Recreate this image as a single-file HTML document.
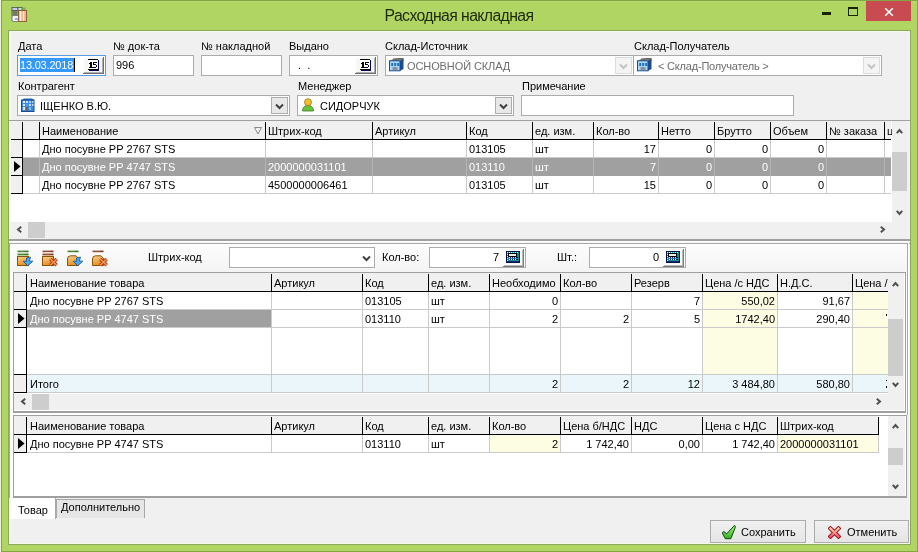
<!DOCTYPE html>
<html><head><meta charset="utf-8"><style>
html,body{margin:0;padding:0;width:918px;height:552px;overflow:hidden;background:#b1d563}
body>div{position:absolute}
.t{will-change:transform;font-family:"Liberation Sans",sans-serif;font-size:11px;line-height:13px;white-space:pre;color:#000}
</style></head><body>
<div style="left:0px;top:0px;width:918px;height:552px;background:#b1d563"></div>
<div style="left:0px;top:0px;width:1px;height:552px;background:#eef3dc"></div>
<div style="left:1px;top:0px;width:917px;height:1px;background:#82a540"></div>
<div style="left:2px;top:1px;width:915px;height:1px;background:#b6da72"></div>
<div style="left:1px;top:0px;width:1px;height:552px;background:#82a540"></div>
<div style="left:917px;top:0px;width:1px;height:552px;background:#82a540"></div>
<div style="left:1px;top:551px;width:917px;height:1px;background:#82a540"></div>
<div style="left:8px;top:30px;width:903px;height:515px;background:#8ca85c"></div>
<div style="left:9px;top:31px;width:901px;height:513px;background:#f4fae8"></div>
<div style="left:10px;top:32px;width:899px;height:511px;background:#f0f0f0"></div>
<div class="t" style="left:0;top:7px;width:918px;text-align:center;font-size:15.8px;letter-spacing:-0.6px;line-height:18px;color:#1c2a0c">Расходная накладная</div>
<svg style="position:absolute;left:10px;top:6px" width="18" height="18" viewBox="0 0 18 18">
<rect x="1.5" y="1.5" width="14" height="14" fill="#6a8050" opacity="0.5"/>
<rect x="2" y="1.5" width="6" height="3" fill="#c8c8f0" stroke="#4a5a48" stroke-width="0.8"/>
<rect x="8" y="1.5" width="4" height="3" fill="#b8e8d0" stroke="#4a5a48" stroke-width="0.8"/>
<rect x="2" y="4.5" width="6.5" height="5" fill="#8a9a70" stroke="#4a5a48" stroke-width="0.6"/>
<path d="M4 4.5 V9.5 M6 4.5 V9.5" stroke="#3a4a38" stroke-width="0.7"/>
<rect x="2" y="9.5" width="7.5" height="6" rx="1.5" fill="#eef0f8" stroke="#6a7080" stroke-width="0.8"/>
<rect x="5" y="12" width="3" height="2" fill="#a0b0d8"/>
<rect x="8.5" y="4.5" width="8" height="11" fill="#f0b890" stroke="#8a5a30" stroke-width="0.9"/>
<path d="M10.5 5 V15 M13.5 5 V15" stroke="#fff0e0" stroke-width="1.2"/>
</svg>
<div style="left:822px;top:12px;width:9px;height:3px;background:#1a2408"></div>
<div style="left:848px;top:7px;width:8px;height:6px;border:1px solid #1a2408;border-top-width:2px"></div>
<div style="left:866px;top:1px;width:45px;height:20px;background:#c74b50"></div>
<svg style="position:absolute;left:884px;top:7px" width="10" height="10" viewBox="0 0 10 10">
<path d="M1.2 1.2 L8.8 8.8 M8.8 1.2 L1.2 8.8" stroke="#fff" stroke-width="1.6"/></svg>
<div style="left:10px;top:31px;width:1px;height:89px;background:#fafafa"></div>
<div class="t" style="left:18px;top:40px;">Дата</div>
<div class="t" style="left:113px;top:40px;">№ док-та</div>
<div class="t" style="left:201px;top:40px;">№ накладной</div>
<div class="t" style="left:289px;top:40px;">Выдано</div>
<div class="t" style="left:385px;top:40px;">Склад-Источник</div>
<div class="t" style="left:634px;top:40px;">Склад-Получатель</div>
<div style="left:17px;top:55px;width:89px;height:21px;background:#569de5"></div>
<div style="left:18px;top:56px;width:87px;height:19px;background:#fff"></div>
<div style="left:20px;top:58px;width:55px;height:14px;background:#3399ff"></div>
<div class="t" style="left:20px;top:59px;color:#fff;letter-spacing:-0.2px">13.03.2018</div>
<div style="left:74px;top:58px;width:1px;height:14px;background:#000"></div>
<div style="left:83px;top:57px;width:21px;height:17px;background:#f6f6f6"></div>
<div style="left:83px;top:57px;width:21px;height:1px;background:#ffffff"></div>
<div style="left:83px;top:57px;width:1px;height:17px;background:#ffffff"></div>
<div style="left:83px;top:73px;width:21px;height:1px;background:#6e6e6e"></div>
<div style="left:103px;top:57px;width:1px;height:17px;background:#6e6e6e"></div>
<div style="left:84px;top:72px;width:19px;height:1px;background:#b0b0b0"></div>
<div style="left:102px;top:58px;width:1px;height:15px;background:#b0b0b0"></div>
<svg style="position:absolute;left:88px;top:59px" width="12" height="12" viewBox="0 0 12 12" shape-rendering="crispEdges">
<rect x="0" y="1" width="10" height="10" fill="#fff"/>
<rect x="0" y="0" width="10" height="1" fill="#000"/>
<rect x="0" y="10" width="10" height="1" fill="#000"/>
<rect x="10" y="1" width="1" height="11" fill="#000066"/>
<rect x="1" y="11" width="10" height="1" fill="#000066"/>
<rect x="1" y="4" width="1" height="1" fill="#000"/>
<rect x="2" y="3" width="2" height="6" fill="#000"/>
<rect x="1" y="8" width="4" height="1" fill="#000"/>
<rect x="5" y="3" width="4" height="1" fill="#000"/>
<rect x="5" y="4" width="1" height="1" fill="#000"/>
<rect x="5" y="5" width="3" height="1" fill="#000"/>
<rect x="8" y="6" width="1" height="2" fill="#000"/>
<rect x="5" y="8" width="3" height="1" fill="#000"/>
<rect x="7" y="5" width="1" height="1" fill="#000"/>
</svg>
<div style="left:113px;top:55px;width:81px;height:21px;background:#ababab"></div>
<div style="left:114px;top:56px;width:79px;height:19px;background:#fff"></div>
<div class="t" style="left:116px;top:59px;">996</div>
<div style="left:201px;top:55px;width:81px;height:21px;background:#ababab"></div>
<div style="left:202px;top:56px;width:79px;height:19px;background:#fff"></div>
<div style="left:289px;top:55px;width:89px;height:21px;background:#ababab"></div>
<div style="left:290px;top:56px;width:87px;height:19px;background:#fff"></div>
<div class="t" style="left:298px;top:59px;letter-spacing:0px">.&nbsp;&nbsp;.</div>
<div style="left:355px;top:57px;width:21px;height:17px;background:#f6f6f6"></div>
<div style="left:355px;top:57px;width:21px;height:1px;background:#ffffff"></div>
<div style="left:355px;top:57px;width:1px;height:17px;background:#ffffff"></div>
<div style="left:355px;top:73px;width:21px;height:1px;background:#6e6e6e"></div>
<div style="left:375px;top:57px;width:1px;height:17px;background:#6e6e6e"></div>
<div style="left:356px;top:72px;width:19px;height:1px;background:#b0b0b0"></div>
<div style="left:374px;top:58px;width:1px;height:15px;background:#b0b0b0"></div>
<svg style="position:absolute;left:360px;top:59px" width="12" height="12" viewBox="0 0 12 12" shape-rendering="crispEdges">
<rect x="0" y="1" width="10" height="10" fill="#fff"/>
<rect x="0" y="0" width="10" height="1" fill="#000"/>
<rect x="0" y="10" width="10" height="1" fill="#000"/>
<rect x="10" y="1" width="1" height="11" fill="#000066"/>
<rect x="1" y="11" width="10" height="1" fill="#000066"/>
<rect x="1" y="4" width="1" height="1" fill="#000"/>
<rect x="2" y="3" width="2" height="6" fill="#000"/>
<rect x="1" y="8" width="4" height="1" fill="#000"/>
<rect x="5" y="3" width="4" height="1" fill="#000"/>
<rect x="5" y="4" width="1" height="1" fill="#000"/>
<rect x="5" y="5" width="3" height="1" fill="#000"/>
<rect x="8" y="6" width="1" height="2" fill="#000"/>
<rect x="5" y="8" width="3" height="1" fill="#000"/>
<rect x="7" y="5" width="1" height="1" fill="#000"/>
</svg>
<div style="left:385px;top:55px;width:249px;height:21px;background:#ababab"></div>
<div style="left:386px;top:56px;width:247px;height:19px;background:#fff"></div>
<svg style="position:absolute;left:389px;top:58px" width="15" height="14" viewBox="0 0 15 14">
<path d="M0.5 3 L4 1 L14.5 0.3 L14.5 3 L11 3 Z" fill="#8a8078"/>
<path d="M4 1 L14.5 0.3" stroke="#404040" stroke-width="0.8"/>
<rect x="0.5" y="2.8" width="10.5" height="10" fill="#a8d8f8" stroke="#1a4a88" stroke-width="1"/>
<path d="M11 2.8 L14.5 0.8 L14.5 11 L11 12.8 Z" fill="#1a4a90"/>
<rect x="2.2" y="5" width="2" height="3" fill="#2070b0"/><rect x="5.2" y="5" width="2" height="3" fill="#2070b0"/><rect x="8.2" y="5" width="2" height="3" fill="#2070b0"/>
<rect x="3.5" y="9" width="5" height="3" fill="#8a9098"/>
</svg>
<div class="t" style="left:407px;top:60px;color:#6d6d6d;letter-spacing:-0.1px">ОСНОВНОЙ СКЛАД</div>
<div style="left:615px;top:57px;width:17px;height:17px;background:#dcdcdc"></div>
<div style="left:616px;top:58px;width:15px;height:15px;background:#f4f4f4"></div>
<svg style="position:absolute;left:619px;top:63px" width="9" height="7" viewBox="0 0 9 7"><path d="M1 1.5 L4.5 5 L8 1.5" fill="none" stroke="#c4c4c4" stroke-width="2"/></svg>
<div style="left:633px;top:55px;width:249px;height:21px;background:#ababab"></div>
<div style="left:634px;top:56px;width:247px;height:19px;background:#fff"></div>
<svg style="position:absolute;left:637px;top:58px" width="15" height="14" viewBox="0 0 15 14">
<path d="M0.5 3 L4 1 L14.5 0.3 L14.5 3 L11 3 Z" fill="#8a8078"/>
<path d="M4 1 L14.5 0.3" stroke="#404040" stroke-width="0.8"/>
<rect x="0.5" y="2.8" width="10.5" height="10" fill="#a8d8f8" stroke="#1a4a88" stroke-width="1"/>
<path d="M11 2.8 L14.5 0.8 L14.5 11 L11 12.8 Z" fill="#1a4a90"/>
<rect x="2.2" y="5" width="2" height="3" fill="#2070b0"/><rect x="5.2" y="5" width="2" height="3" fill="#2070b0"/><rect x="8.2" y="5" width="2" height="3" fill="#2070b0"/>
<rect x="3.5" y="9" width="5" height="3" fill="#8a9098"/>
</svg>
<div class="t" style="left:658px;top:60px;color:#6d6d6d;letter-spacing:-0.2px">&lt; Склад-Получатель &gt;</div>
<div style="left:863px;top:57px;width:17px;height:17px;background:#dcdcdc"></div>
<div style="left:864px;top:58px;width:15px;height:15px;background:#f4f4f4"></div>
<svg style="position:absolute;left:867px;top:63px" width="9" height="7" viewBox="0 0 9 7"><path d="M1 1.5 L4.5 5 L8 1.5" fill="none" stroke="#c4c4c4" stroke-width="2"/></svg>
<div class="t" style="left:18px;top:80px;">Контрагент</div>
<div class="t" style="left:298px;top:80px;">Менеджер</div>
<div class="t" style="left:522px;top:80px;">Примечание</div>
<div style="left:17px;top:95px;width:273px;height:21px;background:#ababab"></div>
<div style="left:18px;top:96px;width:271px;height:19px;background:#fff"></div>
<svg style="position:absolute;left:21px;top:98px" width="14" height="14" viewBox="0 0 14 14">
<path d="M1 2 L3 0.5 L11 0.5 L13 2 Z" fill="#2a6ab0"/>
<rect x="0.5" y="2" width="12.5" height="11.5" fill="#3a8ae0" stroke="#1a4a90" stroke-width="1"/>
<rect x="2" y="3" width="2" height="2" fill="#e8f0ff"/><rect x="5" y="3" width="2" height="2" fill="#c8dcf8"/><rect x="8" y="3" width="2" height="2" fill="#a8c8f0"/><rect x="11" y="3" width="1.5" height="2" fill="#a8c8f0"/>
<rect x="2" y="6" width="2" height="2" fill="#e0ecff"/><rect x="5" y="6" width="2" height="2" fill="#5a9ae8"/><rect x="8" y="6" width="2" height="2" fill="#c0d8f8"/><rect x="11" y="6" width="1.5" height="2" fill="#c0d8f8"/>
<rect x="2" y="9" width="2" height="3" fill="#d8e8ff"/><rect x="5" y="9" width="2" height="4" fill="#706050"/><rect x="8" y="9" width="2" height="3" fill="#80b8f0"/>
</svg>
<div class="t" style="left:40px;top:100px;">ІЩЕНКО В.Ю.</div>
<div style="left:271px;top:97px;width:17px;height:17px;background:#acacac"></div>
<div style="left:272px;top:98px;width:15px;height:15px;background:#e8e8e8"></div>
<svg style="position:absolute;left:275px;top:103px" width="9" height="7" viewBox="0 0 9 7"><path d="M1 1.5 L4.5 5 L8 1.5" fill="none" stroke="#404040" stroke-width="2"/></svg>
<div style="left:297px;top:95px;width:217px;height:21px;background:#ababab"></div>
<div style="left:298px;top:96px;width:215px;height:19px;background:#fff"></div>
<svg style="position:absolute;left:302px;top:98px" width="12" height="14" viewBox="0 0 12 14">
<path d="M0.5 13 C0.5 9 3 7.5 6 7.5 C9 7.5 11.5 9 11.5 13 Z" fill="#6cc040" stroke="#3a8020" stroke-width="0.8"/>
<circle cx="6" cy="4.2" r="3.5" fill="#f4c030" stroke="#a07010" stroke-width="0.8"/>
</svg>
<div class="t" style="left:320px;top:100px;">СИДОРЧУК</div>
<div style="left:495px;top:97px;width:17px;height:17px;background:#acacac"></div>
<div style="left:496px;top:98px;width:15px;height:15px;background:#e8e8e8"></div>
<svg style="position:absolute;left:499px;top:103px" width="9" height="7" viewBox="0 0 9 7"><path d="M1 1.5 L4.5 5 L8 1.5" fill="none" stroke="#404040" stroke-width="2"/></svg>
<div style="left:521px;top:95px;width:273px;height:21px;background:#ababab"></div>
<div style="left:522px;top:96px;width:271px;height:19px;background:#fff"></div>
<div style="left:9px;top:120px;width:901px;height:1px;background:#a0a0a0"></div>
<div style="left:10px;top:121px;width:899px;height:117px;background:#fff"></div>
<div style="left:10px;top:121px;width:881px;height:18px;background:#f0f0f0"></div>
<div style="left:11px;top:139px;width:880px;height:1px;background:#000"></div>
<div style="left:22px;top:122px;width:1px;height:17px;background:#000"></div>
<div style="left:39px;top:122px;width:1px;height:17px;background:#000"></div>
<div style="left:265px;top:122px;width:1px;height:17px;background:#000"></div>
<div style="left:372px;top:122px;width:1px;height:17px;background:#000"></div>
<div style="left:466px;top:122px;width:1px;height:17px;background:#000"></div>
<div style="left:532px;top:122px;width:1px;height:17px;background:#000"></div>
<div style="left:593px;top:122px;width:1px;height:17px;background:#000"></div>
<div style="left:658px;top:122px;width:1px;height:17px;background:#000"></div>
<div style="left:714px;top:122px;width:1px;height:17px;background:#000"></div>
<div style="left:770px;top:122px;width:1px;height:17px;background:#000"></div>
<div style="left:826px;top:122px;width:1px;height:17px;background:#000"></div>
<div style="left:884px;top:122px;width:1px;height:17px;background:#000"></div>
<div class="t" style="left:42px;top:125px;">Наименование</div>
<div class="t" style="left:268px;top:125px;">Штрих-код</div>
<div class="t" style="left:375px;top:125px;">Артикул</div>
<div class="t" style="left:469px;top:125px;">Код</div>
<div class="t" style="left:535px;top:125px;">ед. изм.</div>
<div class="t" style="left:596px;top:125px;">Кол-во</div>
<div class="t" style="left:661px;top:125px;">Нетто</div>
<div class="t" style="left:717px;top:125px;">Брутто</div>
<div class="t" style="left:773px;top:125px;">Объем</div>
<div class="t" style="left:829px;top:125px;">№ заказа</div>
<div class="t" style="left:887px;top:125px;">ц</div>
<svg style="position:absolute;left:254px;top:127px" width="8" height="8" viewBox="0 0 8 8"><path d="M0.5 0.5 L7.5 0.5 L4 7 Z" fill="none" stroke="#8a8a8a" stroke-width="1"/></svg>
<div style="left:11px;top:140px;width:11px;height:17px;background:#f0f0f0"></div>
<div style="left:11px;top:157px;width:12px;height:1px;background:#000"></div>
<div style="left:23px;top:157px;width:868px;height:1px;background:#cacaca"></div>
<div style="left:39px;top:140px;width:1px;height:18px;background:#cacaca"></div>
<div style="left:265px;top:140px;width:1px;height:18px;background:#cacaca"></div>
<div style="left:372px;top:140px;width:1px;height:18px;background:#cacaca"></div>
<div style="left:466px;top:140px;width:1px;height:18px;background:#cacaca"></div>
<div style="left:532px;top:140px;width:1px;height:18px;background:#cacaca"></div>
<div style="left:593px;top:140px;width:1px;height:18px;background:#cacaca"></div>
<div style="left:658px;top:140px;width:1px;height:18px;background:#cacaca"></div>
<div style="left:714px;top:140px;width:1px;height:18px;background:#cacaca"></div>
<div style="left:770px;top:140px;width:1px;height:18px;background:#cacaca"></div>
<div style="left:826px;top:140px;width:1px;height:18px;background:#cacaca"></div>
<div style="left:884px;top:140px;width:1px;height:18px;background:#cacaca"></div>
<div class="t" style="left:42px;top:143px;">Дно посувне PP 2767 STS</div>
<div class="t" style="left:469px;top:143px;">013105</div>
<div class="t" style="left:535px;top:143px;">шт</div>
<div class="t" style="left:606px;top:143px;width:50px;text-align:right;">17</div>
<div class="t" style="left:662px;top:143px;width:50px;text-align:right;">0</div>
<div class="t" style="left:718px;top:143px;width:50px;text-align:right;">0</div>
<div class="t" style="left:774px;top:143px;width:50px;text-align:right;">0</div>
<div style="left:11px;top:158px;width:11px;height:17px;background:#f0f0f0"></div>
<div style="left:11px;top:175px;width:12px;height:1px;background:#000"></div>
<div style="left:23px;top:158px;width:868px;height:18px;background:#a0a0a0"></div>
<div style="left:39px;top:158px;width:1px;height:18px;background:#b4b4b4"></div>
<div style="left:265px;top:158px;width:1px;height:18px;background:#b4b4b4"></div>
<div style="left:372px;top:158px;width:1px;height:18px;background:#b4b4b4"></div>
<div style="left:466px;top:158px;width:1px;height:18px;background:#b4b4b4"></div>
<div style="left:532px;top:158px;width:1px;height:18px;background:#b4b4b4"></div>
<div style="left:593px;top:158px;width:1px;height:18px;background:#b4b4b4"></div>
<div style="left:658px;top:158px;width:1px;height:18px;background:#b4b4b4"></div>
<div style="left:714px;top:158px;width:1px;height:18px;background:#b4b4b4"></div>
<div style="left:770px;top:158px;width:1px;height:18px;background:#b4b4b4"></div>
<div style="left:826px;top:158px;width:1px;height:18px;background:#b4b4b4"></div>
<div style="left:884px;top:158px;width:1px;height:18px;background:#b4b4b4"></div>
<div class="t" style="left:42px;top:161px;color:#fff">Дно посувне PP 4747 STS</div>
<div class="t" style="left:268px;top:161px;color:#fff">2000000031101</div>
<div class="t" style="left:469px;top:161px;color:#fff">013110</div>
<div class="t" style="left:535px;top:161px;color:#fff">шт</div>
<div class="t" style="left:606px;top:161px;width:50px;text-align:right;color:#fff">7</div>
<div class="t" style="left:662px;top:161px;width:50px;text-align:right;color:#fff">0</div>
<div class="t" style="left:718px;top:161px;width:50px;text-align:right;color:#fff">0</div>
<div class="t" style="left:774px;top:161px;width:50px;text-align:right;color:#fff">0</div>
<div style="left:11px;top:176px;width:11px;height:17px;background:#f0f0f0"></div>
<div style="left:11px;top:193px;width:12px;height:1px;background:#000"></div>
<div style="left:23px;top:193px;width:868px;height:1px;background:#cacaca"></div>
<div style="left:39px;top:176px;width:1px;height:18px;background:#cacaca"></div>
<div style="left:265px;top:176px;width:1px;height:18px;background:#cacaca"></div>
<div style="left:372px;top:176px;width:1px;height:18px;background:#cacaca"></div>
<div style="left:466px;top:176px;width:1px;height:18px;background:#cacaca"></div>
<div style="left:532px;top:176px;width:1px;height:18px;background:#cacaca"></div>
<div style="left:593px;top:176px;width:1px;height:18px;background:#cacaca"></div>
<div style="left:658px;top:176px;width:1px;height:18px;background:#cacaca"></div>
<div style="left:714px;top:176px;width:1px;height:18px;background:#cacaca"></div>
<div style="left:770px;top:176px;width:1px;height:18px;background:#cacaca"></div>
<div style="left:826px;top:176px;width:1px;height:18px;background:#cacaca"></div>
<div style="left:884px;top:176px;width:1px;height:18px;background:#cacaca"></div>
<div class="t" style="left:42px;top:179px;">Дно посувне PP 2767 STS</div>
<div class="t" style="left:268px;top:179px;">4500000006461</div>
<div class="t" style="left:469px;top:179px;">013105</div>
<div class="t" style="left:535px;top:179px;">шт</div>
<div class="t" style="left:606px;top:179px;width:50px;text-align:right;">15</div>
<div class="t" style="left:662px;top:179px;width:50px;text-align:right;">0</div>
<div class="t" style="left:718px;top:179px;width:50px;text-align:right;">0</div>
<div class="t" style="left:774px;top:179px;width:50px;text-align:right;">0</div>
<div style="left:22px;top:122px;width:1px;height:72px;background:#000"></div>
<svg style="position:absolute;left:14px;top:161px" width="7" height="11" viewBox="0 0 7 11"><path d="M0 0 L6.5 5.5 L0 11 Z" fill="#000"/></svg>
<div style="left:892px;top:121px;width:17px;height:101px;background:#f0f0f0"></div>
<div style="left:892px;top:152px;width:15px;height:39px;background:#cdcdcd"></div>
<svg style="position:absolute;left:896px;top:128px" width="7" height="6" viewBox="0 0 7 6"><path d="M0.8 5.2 L3.5 2 L6.2 5.2" fill="none" stroke="#505050" stroke-width="2"/></svg>
<svg style="position:absolute;left:896px;top:210px" width="7" height="6" viewBox="0 0 7 6"><path d="M0.8 0.8 L3.5 4 L6.2 0.8" fill="none" stroke="#505050" stroke-width="2"/></svg>
<div style="left:10px;top:222px;width:899px;height:16px;background:#f0f0f0"></div>
<div style="left:28px;top:222px;width:17px;height:16px;background:#cdcdcd"></div>
<svg style="position:absolute;left:16px;top:226px" width="6" height="7" viewBox="0 0 6 7"><path d="M5.2 0.8 L2 3.5 L5.2 6.2" fill="none" stroke="#505050" stroke-width="2"/></svg>
<svg style="position:absolute;left:880px;top:226px" width="6" height="7" viewBox="0 0 6 7"><path d="M0.8 0.8 L4 3.5 L0.8 6.2" fill="none" stroke="#505050" stroke-width="2"/></svg>
<div style="left:9px;top:238px;width:901px;height:6px;background:#f0f0f0"></div>
<div style="left:9px;top:239px;width:901px;height:1px;background:#a0a0a0"></div>
<div style="left:9px;top:240px;width:901px;height:1px;background:#a0a0a0"></div>
<div style="left:9px;top:241px;width:901px;height:1px;background:#ffffff"></div>
<div style="left:9px;top:242px;width:901px;height:1px;background:#f8f8f8"></div>
<div style="left:9px;top:243px;width:901px;height:1px;background:#a0a0a0"></div>
<div style="left:9px;top:243px;width:899px;height:255px;background:#a8a8a8"></div>
<div style="left:10px;top:244px;width:897px;height:254px;background:#fff"></div>
<div style="left:908px;top:243px;width:1px;height:255px;background:#ffffff"></div>
<div style="left:10px;top:244px;width:897px;height:28px;background:linear-gradient(#fdfdfd,#f4f4f4)"></div>
<svg style="position:absolute;left:17px;top:250px" width="17" height="17" viewBox="0 0 17 17">
<defs><linearGradient id="ladd17" x1="0" y1="0" x2="1" y2="0"><stop offset="0" stop-color="#2a6a10" stop-opacity="0.85"/><stop offset="0.5" stop-color="#2a6a10" stop-opacity="0.8"/><stop offset="1" stop-color="#2a6a10"/></linearGradient>
<linearGradient id="fadd17" x1="0" y1="0" x2="0.3" y2="1"><stop offset="0" stop-color="#f8d090"/><stop offset="1" stop-color="#e89020"/></linearGradient></defs>
<rect x="0.5" y="0.6" width="11" height="1.6" fill="url(#ladd17)"/><rect x="0.5" y="3.6" width="11" height="1.6" fill="url(#ladd17)"/><rect x="0.5" y="5.4" width="11" height="1.2" fill="#a0d070"/>
<rect x="0.5" y="6.5" width="11" height="9" fill="url(#fadd17)" stroke="#8a5408" stroke-width="1"/>
<path d="M9.5 8 L13.5 7 L12.3 11 L15.8 11.2 L10.8 15.8 L6.3 11.3 L9.6 11.2 Z" fill="#48a8f0" stroke="#1050a0" stroke-width="0.8" stroke-linejoin="round"/></svg>
<svg style="position:absolute;left:42px;top:250px" width="17" height="17" viewBox="0 0 17 17">
<defs><linearGradient id="ldel42" x1="0" y1="0" x2="1" y2="0"><stop offset="0" stop-color="#7a2a08" stop-opacity="0.85"/><stop offset="0.5" stop-color="#7a2a08" stop-opacity="0.8"/><stop offset="1" stop-color="#7a2a08"/></linearGradient>
<linearGradient id="fdel42" x1="0" y1="0" x2="0.3" y2="1"><stop offset="0" stop-color="#f8d090"/><stop offset="1" stop-color="#e89020"/></linearGradient></defs>
<rect x="0.5" y="0.6" width="11" height="1.6" fill="url(#ldel42)"/><rect x="0.5" y="3.6" width="11" height="1.6" fill="url(#ldel42)"/><rect x="0.5" y="5.4" width="11" height="1.2" fill="#e0a070"/>
<rect x="0.5" y="6.5" width="11" height="9" fill="url(#fdel42)" stroke="#8a5408" stroke-width="1"/>
<path d="M8.3 9 L14.7 15.2 M14.7 9 L8.3 15.2" stroke="#a84010" stroke-width="3.4"/><path d="M8.3 9 L14.7 15.2 M14.7 9 L8.3 15.2" stroke="#f89060" stroke-width="1.6"/></svg>
<svg style="position:absolute;left:67px;top:250px" width="17" height="17" viewBox="0 0 17 17">
<defs><linearGradient id="ladd267" x1="0" y1="0" x2="1" y2="0"><stop offset="0" stop-color="#2a6a10" stop-opacity="0.85"/><stop offset="0.5" stop-color="#2a6a10" stop-opacity="0.8"/><stop offset="1" stop-color="#2a6a10"/></linearGradient>
<linearGradient id="fadd267" x1="0" y1="0" x2="0.3" y2="1"><stop offset="0" stop-color="#f8d090"/><stop offset="1" stop-color="#e89020"/></linearGradient></defs>
<rect x="0.5" y="0.6" width="11" height="1.6" fill="url(#ladd267)"/>
<path d="M0.5 15.5 L0.5 9 Q0.5 5.8 3.5 5.8 L9 5.8 L11.5 8.3 L11.5 15.5 Z" fill="url(#fadd267)" stroke="#8a5408" stroke-width="1"/>
<path d="M9.5 8 L13.5 7 L12.3 11 L15.8 11.2 L10.8 15.8 L6.3 11.3 L9.6 11.2 Z" fill="#48a8f0" stroke="#1050a0" stroke-width="0.8" stroke-linejoin="round"/></svg>
<svg style="position:absolute;left:92px;top:250px" width="17" height="17" viewBox="0 0 17 17">
<defs><linearGradient id="ldel292" x1="0" y1="0" x2="1" y2="0"><stop offset="0" stop-color="#7a2a08" stop-opacity="0.85"/><stop offset="0.5" stop-color="#7a2a08" stop-opacity="0.8"/><stop offset="1" stop-color="#7a2a08"/></linearGradient>
<linearGradient id="fdel292" x1="0" y1="0" x2="0.3" y2="1"><stop offset="0" stop-color="#f8d090"/><stop offset="1" stop-color="#e89020"/></linearGradient></defs>
<rect x="0.5" y="0.6" width="11" height="1.6" fill="url(#ldel292)"/>
<path d="M0.5 15.5 L0.5 9 Q0.5 5.8 3.5 5.8 L9 5.8 L11.5 8.3 L11.5 15.5 Z" fill="url(#fdel292)" stroke="#8a5408" stroke-width="1"/>
<path d="M8.3 9 L14.7 15.2 M14.7 9 L8.3 15.2" stroke="#a84010" stroke-width="3.4"/><path d="M8.3 9 L14.7 15.2 M14.7 9 L8.3 15.2" stroke="#f89060" stroke-width="1.6"/></svg>
<div class="t" style="left:148px;top:251px;">Штрих-код</div>
<div style="left:229px;top:247px;width:146px;height:21px;background:#ababab"></div>
<div style="left:230px;top:248px;width:144px;height:19px;background:#fff"></div>
<svg style="position:absolute;left:362px;top:255px" width="9" height="7" viewBox="0 0 9 7"><path d="M1 1.5 L4.5 5 L8 1.5" fill="none" stroke="#404040" stroke-width="2"/></svg>
<div class="t" style="left:382px;top:251px;">Кол-во:</div>
<div style="left:429px;top:247px;width:97px;height:21px;background:#ababab"></div>
<div style="left:430px;top:248px;width:95px;height:19px;background:#fff"></div>
<div class="t" style="left:459px;top:251px;width:40px;text-align:right;">7</div>
<div style="left:503px;top:249px;width:21px;height:18px;background:#fdfdfd"></div>
<div style="left:503px;top:266px;width:21px;height:1px;background:#7a7a7a"></div>
<div style="left:523px;top:249px;width:1px;height:18px;background:#7a7a7a"></div>
<div style="left:504px;top:265px;width:19px;height:1px;background:#b8b8b8"></div>
<div style="left:522px;top:250px;width:1px;height:16px;background:#b8b8b8"></div>
<svg style="position:absolute;left:506px;top:251px" width="14" height="12" viewBox="0 0 14 12" shape-rendering="crispEdges">
<rect x="0" y="0" width="14" height="12" fill="#04104a"/>
<rect x="1" y="1" width="12" height="9" fill="#1a8a9a"/>
<rect x="1" y="1" width="1" height="1" fill="#c0ffff"/><rect x="3" y="1" width="1" height="1" fill="#c0ffff"/><rect x="5" y="1" width="1" height="1" fill="#c0ffff"/><rect x="7" y="1" width="1" height="1" fill="#c0ffff"/><rect x="9" y="1" width="1" height="1" fill="#c0ffff"/><rect x="11" y="1" width="1" height="1" fill="#c0ffff"/>
<rect x="1" y="3" width="1" height="1" fill="#c0ffff"/><rect x="1" y="5" width="1" height="1" fill="#c0ffff"/><rect x="1" y="7" width="1" height="1" fill="#c0ffff"/><rect x="1" y="9" width="1" height="1" fill="#c0ffff"/>
<rect x="2" y="2" width="9" height="4" fill="#000"/><rect x="3" y="3" width="7" height="2" fill="#e8f0f0"/>
<rect x="3" y="6" width="9" height="1" fill="#0a2050"/><rect x="3" y="8" width="9" height="1" fill="#0a2050"/>
<rect x="3" y="6" width="1" height="1" fill="#d0f0f0"/><rect x="5" y="6" width="1" height="1" fill="#d0f0f0"/><rect x="7" y="6" width="1" height="1" fill="#d0f0f0"/><rect x="9" y="6" width="1" height="1" fill="#d0f0f0"/>
<rect x="3" y="8" width="1" height="1" fill="#d0f0f0"/><rect x="5" y="8" width="1" height="1" fill="#d0f0f0"/><rect x="7" y="8" width="1" height="1" fill="#d0f0f0"/><rect x="9" y="8" width="1" height="1" fill="#d0f0f0"/>
<rect x="1" y="10" width="12" height="1" fill="#0a3070"/>
</svg>
<div class="t" style="left:557px;top:251px;">Шт.:</div>
<div style="left:589px;top:247px;width:97px;height:21px;background:#ababab"></div>
<div style="left:590px;top:248px;width:95px;height:19px;background:#fff"></div>
<div class="t" style="left:619px;top:251px;width:40px;text-align:right;">0</div>
<div style="left:663px;top:249px;width:21px;height:18px;background:#fdfdfd"></div>
<div style="left:663px;top:266px;width:21px;height:1px;background:#7a7a7a"></div>
<div style="left:683px;top:249px;width:1px;height:18px;background:#7a7a7a"></div>
<div style="left:664px;top:265px;width:19px;height:1px;background:#b8b8b8"></div>
<div style="left:682px;top:250px;width:1px;height:16px;background:#b8b8b8"></div>
<svg style="position:absolute;left:666px;top:251px" width="14" height="12" viewBox="0 0 14 12" shape-rendering="crispEdges">
<rect x="0" y="0" width="14" height="12" fill="#04104a"/>
<rect x="1" y="1" width="12" height="9" fill="#1a8a9a"/>
<rect x="1" y="1" width="1" height="1" fill="#c0ffff"/><rect x="3" y="1" width="1" height="1" fill="#c0ffff"/><rect x="5" y="1" width="1" height="1" fill="#c0ffff"/><rect x="7" y="1" width="1" height="1" fill="#c0ffff"/><rect x="9" y="1" width="1" height="1" fill="#c0ffff"/><rect x="11" y="1" width="1" height="1" fill="#c0ffff"/>
<rect x="1" y="3" width="1" height="1" fill="#c0ffff"/><rect x="1" y="5" width="1" height="1" fill="#c0ffff"/><rect x="1" y="7" width="1" height="1" fill="#c0ffff"/><rect x="1" y="9" width="1" height="1" fill="#c0ffff"/>
<rect x="2" y="2" width="9" height="4" fill="#000"/><rect x="3" y="3" width="7" height="2" fill="#e8f0f0"/>
<rect x="3" y="6" width="9" height="1" fill="#0a2050"/><rect x="3" y="8" width="9" height="1" fill="#0a2050"/>
<rect x="3" y="6" width="1" height="1" fill="#d0f0f0"/><rect x="5" y="6" width="1" height="1" fill="#d0f0f0"/><rect x="7" y="6" width="1" height="1" fill="#d0f0f0"/><rect x="9" y="6" width="1" height="1" fill="#d0f0f0"/>
<rect x="3" y="8" width="1" height="1" fill="#d0f0f0"/><rect x="5" y="8" width="1" height="1" fill="#d0f0f0"/><rect x="7" y="8" width="1" height="1" fill="#d0f0f0"/><rect x="9" y="8" width="1" height="1" fill="#d0f0f0"/>
<rect x="1" y="10" width="12" height="1" fill="#0a3070"/>
</svg>
<div style="left:13px;top:272px;width:893px;height:141px;background:#a0a0a0"></div>
<div style="left:14px;top:273px;width:891px;height:138px;background:#fff"></div>
<div style="left:14px;top:273px;width:874px;height:18px;background:#f0f0f0"></div>
<div style="left:14px;top:291px;width:874px;height:1px;background:#000"></div>
<div style="left:26px;top:274px;width:1px;height:17px;background:#000"></div>
<div style="left:271px;top:274px;width:1px;height:17px;background:#000"></div>
<div style="left:362px;top:274px;width:1px;height:17px;background:#000"></div>
<div style="left:428px;top:274px;width:1px;height:17px;background:#000"></div>
<div style="left:489px;top:274px;width:1px;height:17px;background:#000"></div>
<div style="left:560px;top:274px;width:1px;height:17px;background:#000"></div>
<div style="left:631px;top:274px;width:1px;height:17px;background:#000"></div>
<div style="left:702px;top:274px;width:1px;height:17px;background:#000"></div>
<div style="left:777px;top:274px;width:1px;height:17px;background:#000"></div>
<div style="left:852px;top:274px;width:1px;height:17px;background:#000"></div>
<div class="t" style="left:30px;top:277px;">Наименование товара</div>
<div class="t" style="left:274px;top:277px;">Артикул</div>
<div class="t" style="left:365px;top:277px;">Код</div>
<div class="t" style="left:431px;top:277px;">ед. изм.</div>
<div class="t" style="left:492px;top:277px;">Необходимо</div>
<div class="t" style="left:563px;top:277px;">Кол-во</div>
<div class="t" style="left:634px;top:277px;">Резерв</div>
<div class="t" style="left:705px;top:277px;">Цена /с НДС</div>
<div class="t" style="left:780px;top:277px;">Н.Д.С.</div>
<div class="t" style="left:855px;top:277px;">Цена /с</div>
<div style="left:703px;top:292px;width:74px;height:82px;background:#fdfde3"></div>
<div style="left:853px;top:292px;width:35px;height:82px;background:#fdfde3"></div>
<div style="left:14px;top:292px;width:12px;height:17px;background:#f0f0f0"></div>
<div style="left:14px;top:309px;width:13px;height:1px;background:#000"></div>
<div style="left:27px;top:309px;width:861px;height:1px;background:#cacaca"></div>
<div class="t" style="left:30px;top:295px;">Дно посувне PP 2767 STS</div>
<div class="t" style="left:365px;top:295px;">013105</div>
<div class="t" style="left:431px;top:295px;">шт</div>
<div class="t" style="left:488px;top:295px;width:70px;text-align:right;">0</div>
<div class="t" style="left:630px;top:295px;width:70px;text-align:right;">7</div>
<div class="t" style="left:705px;top:295px;width:70px;text-align:right;">550,02</div>
<div class="t" style="left:780px;top:295px;width:70px;text-align:right;">91,67</div>
<div style="left:14px;top:310px;width:12px;height:17px;background:#f0f0f0"></div>
<div style="left:14px;top:327px;width:13px;height:1px;background:#000"></div>
<div style="left:27px;top:327px;width:861px;height:1px;background:#cacaca"></div>
<div style="left:27px;top:310px;width:244px;height:17px;background:#a0a0a0"></div>
<div class="t" style="left:30px;top:313px;color:#fff">Дно посувне PP 4747 STS</div>
<div class="t" style="left:365px;top:313px;">013110</div>
<div class="t" style="left:431px;top:313px;">шт</div>
<div class="t" style="left:488px;top:313px;width:70px;text-align:right;">2</div>
<div class="t" style="left:559px;top:313px;width:70px;text-align:right;">2</div>
<div class="t" style="left:630px;top:313px;width:70px;text-align:right;">5</div>
<div class="t" style="left:705px;top:313px;width:70px;text-align:right;">1742,40</div>
<div class="t" style="left:780px;top:313px;width:70px;text-align:right;">290,40</div>
<div style="left:886px;top:314px;width:1px;height:2px;background:#000"></div>
<div style="left:271px;top:292px;width:1px;height:100px;background:#cacaca"></div>
<div style="left:362px;top:292px;width:1px;height:100px;background:#cacaca"></div>
<div style="left:428px;top:292px;width:1px;height:100px;background:#cacaca"></div>
<div style="left:489px;top:292px;width:1px;height:100px;background:#cacaca"></div>
<div style="left:560px;top:292px;width:1px;height:100px;background:#cacaca"></div>
<div style="left:631px;top:292px;width:1px;height:100px;background:#cacaca"></div>
<div style="left:702px;top:292px;width:1px;height:100px;background:#cacaca"></div>
<div style="left:777px;top:292px;width:1px;height:100px;background:#cacaca"></div>
<div style="left:852px;top:292px;width:1px;height:100px;background:#cacaca"></div>
<div style="left:26px;top:274px;width:1px;height:119px;background:#000"></div>
<svg style="position:absolute;left:18px;top:313px" width="7" height="11" viewBox="0 0 7 11"><path d="M0 0 L6.5 5.5 L0 11 Z" fill="#000"/></svg>
<div style="left:27px;top:375px;width:861px;height:17px;background:#ebf6fb"></div>
<div style="left:14px;top:375px;width:12px;height:17px;background:#f0f0f0"></div>
<div style="left:14px;top:374px;width:13px;height:1px;background:#000"></div>
<div style="left:27px;top:374px;width:861px;height:1px;background:#cacaca"></div>
<div style="left:14px;top:392px;width:13px;height:1px;background:#000"></div>
<div style="left:27px;top:392px;width:861px;height:1px;background:#cacaca"></div>
<div style="left:271px;top:375px;width:1px;height:17px;background:#cacaca"></div>
<div style="left:362px;top:375px;width:1px;height:17px;background:#cacaca"></div>
<div style="left:428px;top:375px;width:1px;height:17px;background:#cacaca"></div>
<div style="left:489px;top:375px;width:1px;height:17px;background:#cacaca"></div>
<div style="left:560px;top:375px;width:1px;height:17px;background:#cacaca"></div>
<div style="left:631px;top:375px;width:1px;height:17px;background:#cacaca"></div>
<div style="left:702px;top:375px;width:1px;height:17px;background:#cacaca"></div>
<div style="left:777px;top:375px;width:1px;height:17px;background:#cacaca"></div>
<div style="left:852px;top:375px;width:1px;height:17px;background:#cacaca"></div>
<div class="t" style="left:30px;top:378px;">Итого</div>
<div style="left:886px;top:380px;width:1px;height:1px;background:#000"></div>
<div style="left:886px;top:386px;width:1px;height:2px;background:#000"></div>
<div class="t" style="left:488px;top:378px;width:70px;text-align:right;">2</div>
<div class="t" style="left:559px;top:378px;width:70px;text-align:right;">2</div>
<div class="t" style="left:630px;top:378px;width:70px;text-align:right;">12</div>
<div class="t" style="left:705px;top:378px;width:70px;text-align:right;">3 484,80</div>
<div class="t" style="left:780px;top:378px;width:70px;text-align:right;">580,80</div>
<div style="left:888px;top:273px;width:16px;height:137px;background:#f0f0f0"></div>
<div style="left:888px;top:319px;width:15px;height:57px;background:#cdcdcd"></div>
<svg style="position:absolute;left:892px;top:281px" width="7" height="6" viewBox="0 0 7 6"><path d="M0.8 5.2 L3.5 2 L6.2 5.2" fill="none" stroke="#505050" stroke-width="2"/></svg>
<svg style="position:absolute;left:892px;top:382px" width="7" height="6" viewBox="0 0 7 6"><path d="M0.8 0.8 L3.5 4 L6.2 0.8" fill="none" stroke="#505050" stroke-width="2"/></svg>
<div style="left:14px;top:394px;width:890px;height:16px;background:#f0f0f0"></div>
<div style="left:32px;top:394px;width:17px;height:16px;background:#cdcdcd"></div>
<svg style="position:absolute;left:20px;top:398px" width="6" height="7" viewBox="0 0 6 7"><path d="M5.2 0.8 L2 3.5 L5.2 6.2" fill="none" stroke="#505050" stroke-width="2"/></svg>
<svg style="position:absolute;left:876px;top:398px" width="6" height="7" viewBox="0 0 6 7"><path d="M0.8 0.8 L4 3.5 L0.8 6.2" fill="none" stroke="#505050" stroke-width="2"/></svg>
<div style="left:13px;top:415px;width:894px;height:83px;background:#a0a0a0"></div>
<div style="left:14px;top:416px;width:892px;height:80px;background:#fff"></div>
<div style="left:907px;top:415px;width:2px;height:83px;background:#f0f0f0"></div>
<div style="left:14px;top:416px;width:864px;height:18px;background:#f0f0f0"></div>
<div style="left:14px;top:434px;width:865px;height:1px;background:#000"></div>
<div style="left:26px;top:417px;width:1px;height:17px;background:#000"></div>
<div style="left:271px;top:417px;width:1px;height:17px;background:#000"></div>
<div style="left:362px;top:417px;width:1px;height:17px;background:#000"></div>
<div style="left:428px;top:417px;width:1px;height:17px;background:#000"></div>
<div style="left:489px;top:417px;width:1px;height:17px;background:#000"></div>
<div style="left:560px;top:417px;width:1px;height:17px;background:#000"></div>
<div style="left:631px;top:417px;width:1px;height:17px;background:#000"></div>
<div style="left:702px;top:417px;width:1px;height:17px;background:#000"></div>
<div style="left:777px;top:417px;width:1px;height:17px;background:#000"></div>
<div style="left:878px;top:417px;width:1px;height:17px;background:#000"></div>
<div class="t" style="left:30px;top:420px;">Наименование товара</div>
<div class="t" style="left:274px;top:420px;">Артикул</div>
<div class="t" style="left:365px;top:420px;">Код</div>
<div class="t" style="left:431px;top:420px;">ед. изм.</div>
<div class="t" style="left:492px;top:420px;">Кол-во</div>
<div class="t" style="left:563px;top:420px;">Цена б/НДС</div>
<div class="t" style="left:634px;top:420px;">НДС</div>
<div class="t" style="left:705px;top:420px;">Цена с НДС</div>
<div class="t" style="left:780px;top:420px;">Штрих-код</div>
<div style="left:14px;top:435px;width:12px;height:17px;background:#f0f0f0"></div>
<div style="left:14px;top:452px;width:13px;height:1px;background:#000"></div>
<div style="left:27px;top:452px;width:852px;height:1px;background:#cacaca"></div>
<div style="left:26px;top:417px;width:1px;height:36px;background:#000"></div>
<div style="left:490px;top:435px;width:70px;height:17px;background:#fdfde3"></div>
<div style="left:778px;top:435px;width:100px;height:17px;background:#fdfde3"></div>
<div style="left:271px;top:435px;width:1px;height:18px;background:#cacaca"></div>
<div style="left:362px;top:435px;width:1px;height:18px;background:#cacaca"></div>
<div style="left:428px;top:435px;width:1px;height:18px;background:#cacaca"></div>
<div style="left:489px;top:435px;width:1px;height:18px;background:#cacaca"></div>
<div style="left:560px;top:435px;width:1px;height:18px;background:#cacaca"></div>
<div style="left:631px;top:435px;width:1px;height:18px;background:#cacaca"></div>
<div style="left:702px;top:435px;width:1px;height:18px;background:#cacaca"></div>
<div style="left:777px;top:435px;width:1px;height:18px;background:#cacaca"></div>
<div style="left:878px;top:435px;width:1px;height:18px;background:#cacaca"></div>
<svg style="position:absolute;left:18px;top:438px" width="7" height="11" viewBox="0 0 7 11"><path d="M0 0 L6.5 5.5 L0 11 Z" fill="#000"/></svg>
<div class="t" style="left:30px;top:438px;">Дно посувне PP 4747 STS</div>
<div class="t" style="left:365px;top:438px;">013110</div>
<div class="t" style="left:431px;top:438px;">шт</div>
<div class="t" style="left:508px;top:438px;width:50px;text-align:right;">2</div>
<div class="t" style="left:569px;top:438px;width:60px;text-align:right;">1 742,40</div>
<div class="t" style="left:640px;top:438px;width:60px;text-align:right;">0,00</div>
<div class="t" style="left:715px;top:438px;width:60px;text-align:right;">1 742,40</div>
<div class="t" style="left:780px;top:438px;">2000000031101</div>
<div style="left:888px;top:416px;width:17px;height:80px;background:#f0f0f0"></div>
<div style="left:888px;top:448px;width:15px;height:17px;background:#cdcdcd"></div>
<svg style="position:absolute;left:892px;top:423px" width="7" height="6" viewBox="0 0 7 6"><path d="M0.8 5.2 L3.5 2 L6.2 5.2" fill="none" stroke="#505050" stroke-width="2"/></svg>
<svg style="position:absolute;left:892px;top:484px" width="7" height="6" viewBox="0 0 7 6"><path d="M0.8 0.8 L3.5 4 L6.2 0.8" fill="none" stroke="#505050" stroke-width="2"/></svg>
<div style="left:9px;top:498px;width:47px;height:21px;background:#fff"></div>
<div style="left:56px;top:499px;width:89px;height:19px;background:#a8a8a8"></div>
<div style="left:57px;top:500px;width:87px;height:18px;background:#e6e6e6"></div>
<div style="left:55px;top:498px;width:1px;height:21px;background:#a8a8a8"></div>
<div class="t" style="left:18px;top:504px;">Товар</div>
<div class="t" style="left:61px;top:501px;">Дополнительно</div>
<div style="left:710px;top:520px;width:96px;height:23px;background:#acacac"></div>
<div style="left:711px;top:521px;width:94px;height:21px;background:linear-gradient(#f0f0f0,#e5e5e5)"></div>
<svg style="position:absolute;left:718px;top:522px" width="20" height="20" viewBox="0 0 20 20">
<defs><linearGradient id="gck" x1="0" y1="0" x2="0" y2="1"><stop offset="0" stop-color="#a8f880"/><stop offset="1" stop-color="#30b020"/></linearGradient></defs>
<path d="M4.3 11 L5.6 9.4 L8.7 11.8 L16.6 3.3 L17.4 5 L12.8 16.7 L7.3 16.7 Z" fill="url(#gck)" stroke="#0a4a08" stroke-width="1" stroke-linejoin="round"/></svg>
<div class="t" style="left:741px;top:526px;">Сохранить</div>
<div style="left:814px;top:520px;width:95px;height:23px;background:#acacac"></div>
<div style="left:815px;top:521px;width:93px;height:21px;background:linear-gradient(#f0f0f0,#e5e5e5)"></div>
<svg style="position:absolute;left:828px;top:526px" width="13" height="13" viewBox="0 0 13 13">
<defs><linearGradient id="gx" x1="0" y1="0" x2="0" y2="1"><stop offset="0" stop-color="#fcd0a8"/><stop offset="1" stop-color="#f05870"/></linearGradient></defs>
<path d="M2.5 2.5 L10.5 10.5 M10.5 2.5 L2.5 10.5" stroke="#a01828" stroke-width="4.2" stroke-linecap="square"/>
<path d="M2.5 2.5 L10.5 10.5 M10.5 2.5 L2.5 10.5" stroke="url(#gx)" stroke-width="2.2" stroke-linecap="square"/></svg>
<div class="t" style="left:847px;top:526px;">Отменить</div>
</body></html>
